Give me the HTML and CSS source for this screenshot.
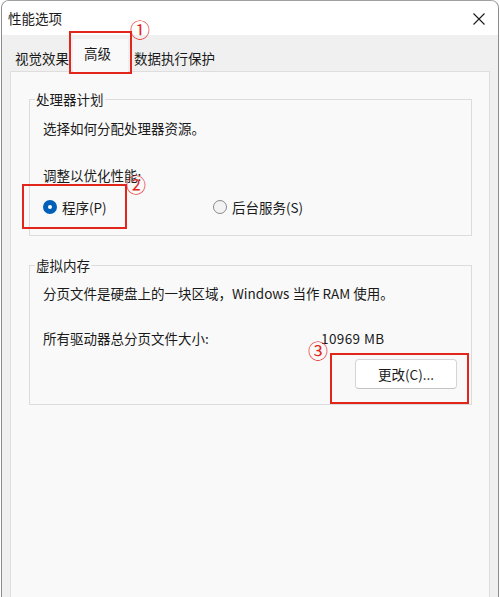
FILE: index.html
```html
<!DOCTYPE html>
<html lang="zh-CN">
<head>
    <meta charset="UTF-8">
    <meta name="viewport" content="width=device-width, initial-scale=1.0">
    <title>性能选项</title>
    <link rel="stylesheet" href="styles.css">
</head>
<body>
    <div class="window">
        <div class="titlebar">
            <span class="title">性能选项</span>
            <span class="close">
                <svg width="12" height="12" viewBox="0 0 12 12"><path d="M0.5 0.5L11.5 11.5M11.5 0.5L0.5 11.5" stroke="#1b1b1b" stroke-width="1.1" fill="none"/></svg>
            </span>
        </div>
        <div class="content">
            <div class="tabs">
                <span class="tab first">视觉效果</span>
                <span class="tab active">高级</span>
                <span class="tab last">数据执行保护</span>
            </div>
            <div class="panel">
                <fieldset class="group cpu">
                    <legend>处理器计划</legend>
                    <p>选择如何分配处理器资源。</p>
                    <p class="tune">调整以优化性能:</p>
                    <div class="radios">
                        <label class="radio checked"><span class="dot"></span>程序(P)</label>
                        <label class="radio"><span class="dot"></span>后台服务(S)</label>
                    </div>
                </fieldset>
                <fieldset class="group vm">
                    <legend>虚拟内存</legend>
                    <p>分页文件是硬盘上的一块区域，Windows 当作 RAM 使用。</p>
                    <div class="size-row">
                        <span>所有驱动器总分页文件大小:</span>
                        <span class="size">10969 MB</span>
                    </div>
                    <div class="btn-row">
                        <button class="btn">更改(C)...</button>
                    </div>
                </fieldset>
            </div>
        </div>
    </div>

    <!-- пометки поверх скриншота -->
    <div class="mark m1"></div>
    <span class="num n1">①</span>
    <div class="mark m2"></div>
    <span class="num n2">②</span>
    <div class="mark m3"></div>
    <span class="num n3">③</span>
</body>
</html>
```

FILE: styles.css
```css
body {
    margin: 0;
    padding: 0;
    position: relative;
    height: 597px;
    overflow: hidden;
    background: #ffffff;
    font-family: "Noto Sans CJK SC", "Noto Sans", sans-serif;
    font-size: 13.5px;
    color: #1a1a1a;
}
.window {
    margin-left: 1px;
    width: 496px;
    height: 596px;
    border: 1px solid #8c8c8c;
    border-top-color: #a0a0a0;
    border-bottom: 0;
    border-radius: 8px 8px 0 0;
    background: #f0f0f0;
    overflow: hidden;
    display: flex;
    flex-direction: column;
}
.titlebar {
    height: 34px;
    flex-shrink: 0;
    background: #ffffff;
    display: flex;
    align-items: center;
    justify-content: space-between;
    padding: 0 13px 0 6px;
}
.title {
    line-height: 18px;
}
.close {
    display: flex;
    margin-top: 1px;
}
.content {
    flex: 1;
    display: flex;
    flex-direction: column;
    padding: 0 8px;
}
.tabs {
    height: 36px;
    flex-shrink: 0;
    display: flex;
    align-items: flex-end;
}
.tab {
    line-height: 18px;
    padding: 4px 3px 5px 5px;
    position: relative;
    top: 1px;
}
.tab.active {
    background: #f9f9f9;
    padding: 5px 17px 10px 11px;
    margin-left: 1px;
}
.tab.last {
    padding-left: 6px;
}
.panel {
    flex: 1;
    background: #f9f9f9;
    border: 1px solid #dedede;
    border-bottom: 0;
    padding: 18px 17px 0 18px;
}
.group {
    margin: 0;
    border: 1px solid #dcdcdc;
    padding: 11px 14px 0 13px;
    min-width: 0;
}
.group legend {
    margin-left: -8px;
    padding: 0 1px;
    line-height: 18px;
}
.group p {
    margin: 0;
    line-height: 18px;
}
.cpu {
    padding-bottom: 19px;
}
.cpu .tune {
    margin-top: 29px;
}
.radios {
    display: flex;
    margin-top: 14px;
    line-height: 18px;
}
.radio {
    display: flex;
    align-items: center;
    gap: 5px;
    width: 170px;
}
.dot {
    width: 12px;
    height: 12px;
    border-radius: 50%;
    border: 1px solid #8a8a8a;
    background: #f3f3f3;
    box-sizing: content-box;
}
.radio.checked .dot {
    width: 4px;
    height: 4px;
    border: 5px solid #005fb8;
    background: #ffffff;
}
.vm {
    margin-top: 20px;
    padding-top: 10px;
    padding-bottom: 15px;
}
.size-row {
    display: grid;
    grid-template-columns: 278px auto;
    margin-top: 27px;
    line-height: 18px;
}
.size {
    letter-spacing: 0.4px;
}
.btn-row {
    display: flex;
    justify-content: flex-end;
    margin-top: 12px;
}
.btn {
    width: 102px;
    height: 30px;
    background: #ffffff;
    border: 1px solid #d5d5d5;
    border-bottom-color: #c4c4c4;
    border-radius: 4px;
    font-family: inherit;
    font-size: 13.5px;
    color: #1a1a1a;
    padding: 0;
}
.mark {
    position: absolute;
    border: 2px solid #e3261c;
    box-sizing: border-box;
}
.m1 { left: 69px; top: 31px; width: 63px; height: 43px; }
.m2 { left: 22px; top: 184px; width: 105px; height: 45px; }
.m3 { left: 330px; top: 353px; width: 139px; height: 51px; }
.num {
    position: absolute;
    color: #e3261c;
    font-family: "Noto Sans CJK SC", sans-serif;
    font-size: 20px;
    line-height: 20px;
}
.n1 { left: 130px; top: 20px; }
.n2 { left: 126px; top: 175px; }
.n3 { left: 308px; top: 341px; }
```
